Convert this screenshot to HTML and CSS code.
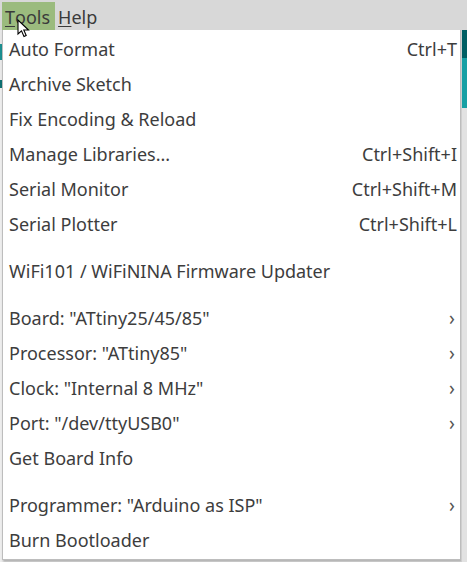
FILE: index.html
```html
<!DOCTYPE html>
<html>
<head>
<meta charset="utf-8">
<link rel="stylesheet" href="styles.css">
</head>
<body>
<div class="menubar">
  <span class="mb-item active"><u>T</u>ools</span>
  <span class="mb-item"><u>H</u>elp</span>
  <svg class="cursor" width="14" height="20" viewBox="0 0 14 20"><path d="M1 1 L1 15 L4.5 11.8 L7 17.5 L9.2 16.5 L6.8 11 L11.5 11 Z" fill="#fff" stroke="#000" stroke-width="1.1" stroke-linejoin="miter"/></svg>
</div>
<div class="backdrop">
  <div class="strip-left">
    <div class="sl sl1"></div><div class="sl sl2"></div><div class="sl sl3"></div><div class="sl sl4"></div><div class="sl sl5"></div>
  </div>
  <div class="menu">
    <div class="row"><span>Auto Format</span><span class="sc">Ctrl+T</span></div>
    <div class="row"><span>Archive Sketch</span></div>
    <div class="row"><span>Fix Encoding &amp; Reload</span></div>
    <div class="row"><span>Manage Libraries...</span><span class="sc">Ctrl+Shift+I</span></div>
    <div class="row"><span>Serial Monitor</span><span class="sc">Ctrl+Shift+M</span></div>
    <div class="row"><span>Serial Plotter</span><span class="sc">Ctrl+Shift+L</span></div>
    <div class="sep"></div>
    <div class="row"><span>WiFi101 / WiFiNINA Firmware Updater</span></div>
    <div class="sep"></div>
    <div class="row"><span>Board: "ATtiny25/45/85"</span><span class="chev">&#x203A;</span></div>
    <div class="row"><span>Processor: "ATtiny85"</span><span class="chev">&#x203A;</span></div>
    <div class="row"><span>Clock: "Internal 8 MHz"</span><span class="chev">&#x203A;</span></div>
    <div class="row"><span>Port: "/dev/ttyUSB0"</span><span class="chev">&#x203A;</span></div>
    <div class="row"><span>Get Board Info</span></div>
    <div class="sep"></div>
    <div class="row"><span>Programmer: "Arduino as ISP"</span><span class="chev">&#x203A;</span></div>
    <div class="row"><span>Burn Bootloader</span></div>
  </div>
  <div class="strip-right">
    <div class="sr1"></div><div class="sr2"></div><div class="sr3"></div>
  </div>
</div>
</body>
</html>
```
FILE: styles.css
```css
html, body {
  margin: 0;
  padding: 0;
  width: 467px;
  height: 562px;
  overflow: hidden;
  background: #eeeeee;
  font-family: "Noto Sans", "Open Sans", sans-serif;
}
.menubar {
  position: relative;
  height: 30px;
  background: #d8d8d8;
  display: flex;
  align-items: stretch;
  padding-left: 2px;
  box-sizing: border-box;
  padding-top: 2px;
}
.mb-item {
  font-size: 18px;
  color: #3a3a3a;
  display: flex;
  align-items: center;
  padding: 2px 3px 0 3px;
  height: 27px;
  box-sizing: border-box;
  height: 28px;
}
.mb-item.active {
  background: #9bbb7e;
  padding-right: 5px;
}
.mb-item u {
  text-decoration-thickness: 1px;
  text-underline-offset: 2px;
}
.cursor {
  position: absolute;
  left: 17px;
  top: 19px;
}
.backdrop {
  display: flex;
  height: 532px;
}
.strip-left {
  width: 2px;
  background: #f2f2f2;
  display: flex;
  flex-direction: column;
}
.sl { width: 2px; }
.sl1 { height: 14px; background: #e6e6e6; }
.sl2 { height: 16px; background: #1c8f90; }
.sl3 { height: 20px; background: #e8e8e8; }
.sl4 { height: 8px; background: #0e7072; }
.sl5 { flex: 1; background: #ededed; }
.menu {
  width: 459px;
  background: #ffffff;
  border: 1px solid #bdbdbd;
  border-top: none;
  box-sizing: border-box;
  padding: 1px 0 3px 0;
  height: 530px;
  box-shadow: 1px 2px 2px rgba(0,0,0,0.25);
  color: #3d3d3d;
  font-size: 18px;
}
.row {
  height: 35px;
  display: flex;
  align-items: center;
  justify-content: space-between;
  padding: 0 3px 0 6px;
}
.sc {
  color: #3d3d3d;
}
.chev {
  font-size: 19px;
  color: #555;
  padding-right: 2px;
}
.sep {
  height: 12px;
}
.strip-right {
  flex: 1;
  display: flex;
  flex-direction: column;
  background: #e4e4e4;
  border-left: 1px solid #cfcfcf;
}
.sr1 { height: 28px; background: #005f63; }
.sr2 { height: 50px; background: #17a0a4; }
.sr3 { flex: 1; background: #e2e2e2; }
```
